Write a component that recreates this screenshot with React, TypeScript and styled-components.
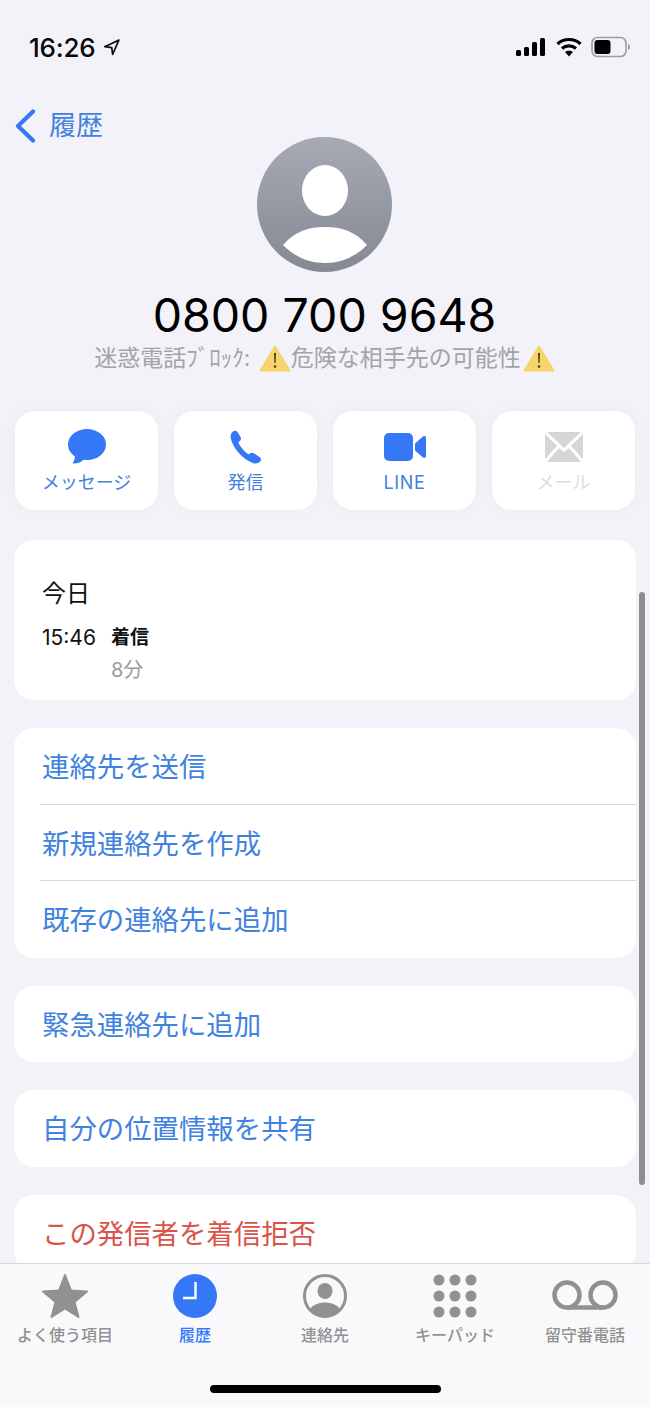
import { createGlobalStyle, styled } from "styled-components";

const BLUE = "#3478f6";
const LINK = "#3f82e0";

const GlobalStyle = createGlobalStyle`
  html, body {
    margin: 0;
    padding: 0;
    background: #f2f2f8;
  }
  body {
    font-family: Inter, "Noto Sans CJK JP", sans-serif;
  }
`;

const Phone = styled.div`
  position: relative;
  width: 650px;
  height: 1407px;
  display: flex;
  flex-direction: column;
  overflow: hidden;
  background: #f2f2f8;
`;

const Content = styled.div`
  flex: 1;
  min-height: 0;
  overflow: hidden;
`;

const StatusBar = styled.div`
  height: 95px;
  padding: 32px 19px 0 29px;
  box-sizing: border-box;
  display: flex;
  justify-content: space-between;
  align-items: flex-start;
`;

const Time = styled.div`
  display: flex;
  align-items: center;
  gap: 8px;
  height: 30px;
  font-size: 26px;
  font-weight: 500;
  letter-spacing: -0.2px;
  color: #0a0a0a;
`;

const StatusIcons = styled.div`
  display: flex;
  align-items: center;
  gap: 9px;
  height: 30px;
`;

const BackLink = styled.div`
  display: flex;
  align-items: center;
  gap: 13px;
  height: 42px;
  padding: 10px 0 0 15px;
  font-size: 27px;
  line-height: 42px;
  color: ${LINK};
`;

const Profile = styled.div`
  display: flex;
  flex-direction: column;
  align-items: center;
  margin-top: -10px;
  padding-right: 1px;
`;

const Avatar = styled.div`
  width: 135px;
  height: 135px;
  border-radius: 50%;
  background: linear-gradient(#a6aab5, #858993);
  overflow: hidden;
`;

const PhoneNumber = styled.div`
  margin-top: 14px;
  height: 58px;
  line-height: 58px;
  font-size: 46.5px;
  color: #000;
`;

const Caption = styled.div`
  display: flex;
  align-items: center;
  height: 30px;
  margin-top: -1px;
  font-size: 23px;
  line-height: 30px;
  color: #a3a3a8;
  white-space: nowrap;
`;

const WarningMark = styled.svg`
  margin-left: 2px;
`;

const Actions = styled.div`
  display: grid;
  grid-template-columns: repeat(4, 143px);
  column-gap: 16px;
  margin: 38px 15px 0;
`;

const ActionButton = styled.div<{ $disabled?: boolean }>`
  height: 99px;
  border-radius: 20px;
  background: #fff;
  display: flex;
  flex-direction: column;
  align-items: center;
  padding-top: 18px;
  box-sizing: border-box;
  color: ${(p) => (p.$disabled ? "#dcdcde" : LINK)};
  box-shadow: 0 0 12px rgba(120, 120, 150, 0.05);
`;

const ActionIcon = styled.div`
  height: 36px;
  display: flex;
  align-items: center;
  justify-content: center;
`;

const ActionLabel = styled.div<{ $wide?: boolean }>`
  margin-top: 6px;
  height: 24px;
  line-height: 24px;
  font-size: 18px;
  letter-spacing: ${(p) => (p.$wide ? "0.7px" : "0")};
`;

const Card = styled.div<{ $gap?: number }>`
  margin: ${(p) => p.$gap ?? 28}px 14px 0;
  background: #fff;
  border-radius: 20px;
  overflow: hidden;
`;

const HistoryCard = styled(Card)`
  height: 160px;
  padding: 38px 28px 0;
  box-sizing: border-box;
`;

const HistoryDay = styled.div`
  height: 32px;
  line-height: 32px;
  font-size: 24px;
  color: #111;
`;

const HistoryRow = styled.div`
  display: grid;
  grid-template-columns: 69px auto;
  align-items: center;
  margin-top: 13px;
  font-size: 21px;
  line-height: 30px;
  color: #111;
`;

const CallType = styled.div`
  font-size: 19px;
  font-weight: 700;
`;

const Duration = styled.div`
  grid-column: 2;
  margin-top: 2px;
  font-size: 20px;
  color: #9b9b9f;
`;

const Row = styled.div<{ $danger?: boolean }>`
  height: 76.5px;
  line-height: 78.5px;
  padding-left: 28px;
  font-size: 27.4px;
  color: ${(p) => (p.$danger ? "#d9534a" : LINK)};
`;

const Divider = styled.div`
  height: 1px;
  margin-left: 26px;
  margin-top: -1px;
  background: #d8d8da;
`;

const Scrollbar = styled.div`
  position: absolute;
  top: 592px;
  left: 639px;
  width: 6px;
  height: 593px;
  border-radius: 3px;
  background: #8d8d93;
`;

const TabBar = styled.div`
  flex: none;
  height: 144px;
  box-sizing: border-box;
  border-top: 1px solid #d9d9dc;
  background: #f9f9fc;
  display: grid;
  grid-template-columns: repeat(5, 130px);
`;

const Tab = styled.div<{ $active?: boolean }>`
  display: flex;
  flex-direction: column;
  align-items: center;
  padding-top: 8px;
  color: ${(p) => (p.$active ? BLUE : "#919193")};
`;

const TabIcon = styled.div`
  height: 48px;
  display: flex;
  align-items: center;
  justify-content: center;
`;

const TabLabel = styled.div`
  margin-top: 4px;
  height: 22px;
  line-height: 22px;
  font-size: 16px;
  font-weight: 500;
  white-space: nowrap;
`;

const HomeIndicator = styled.div`
  position: absolute;
  left: 210px;
  top: 1385px;
  width: 231px;
  height: 8px;
  border-radius: 4px;
  background: #000;
`;

function Warning() {
  return (
    <WarningMark width="32" height="27" viewBox="0 0 32 27">
      <path
        d="M16 1.5 L30.5 25.5 H1.5 Z"
        fill="#f7d56c"
        stroke="#f7d56c"
        strokeWidth="2"
        strokeLinejoin="round"
      />
      <path d="M15 8 h2 l-.4 10 h-1.2 Z" fill="#4a3f1c" />
      <circle cx="16" cy="21.5" r="1.3" fill="#4a3f1c" />
    </WarningMark>
  );
}

const tabs = [
  {
    label: "よく使う項目",
    icon: (
      <svg width="48" height="46" viewBox="0 0 48 46" fill="currentColor">
        <path
          d="M24 2 L30 17.5 L46 18.5 L33.5 29 L37.5 44 L24 35.5 L10.5 44 L14.5 29 L2 18.5 L18 17.5 Z"
          stroke="currentColor"
          strokeWidth="2"
          strokeLinejoin="round"
        />
      </svg>
    ),
  },
  {
    label: "履歴",
    active: true,
    icon: (
      <svg width="44" height="44" viewBox="0 0 44 44">
        <circle cx="22" cy="22" r="22" fill="currentColor" />
        <path d="M22.5 8 V24 H10" fill="none" stroke="#fff" strokeWidth="2.4" />
      </svg>
    ),
  },
  {
    label: "連絡先",
    icon: (
      <svg width="46" height="46" viewBox="0 0 46 46">
        <defs>
          <clipPath id="contactClip">
            <circle cx="23" cy="23" r="20" />
          </clipPath>
        </defs>
        <circle cx="23" cy="23" r="20.5" fill="none" stroke="currentColor" strokeWidth="3" />
        <ellipse cx="23" cy="18" rx="7.5" ry="8" fill="currentColor" />
        <ellipse cx="23" cy="40" rx="16" ry="10.5" fill="currentColor" clipPath="url(#contactClip)" />
      </svg>
    ),
  },
  {
    label: "キーパッド",
    icon: (
      <svg width="44" height="44" viewBox="0 0 44 44" fill="currentColor">
        {[6, 22, 38].map((cy) =>
          [6, 22, 38].map((cx) => <circle key={`${cx}-${cy}`} cx={cx} cy={cy} r="5.5" />),
        )}
      </svg>
    ),
  },
  {
    label: "留守番電話",
    icon: (
      <svg width="66" height="34" viewBox="0 0 66 34" fill="none" stroke="currentColor" strokeWidth="4.5">
        <circle cx="15" cy="16" r="12.5" />
        <circle cx="51" cy="16" r="12.5" />
        <path d="M15 28.5 H51" />
      </svg>
    ),
  },
];

export default function App() {
  return (
    <Phone>
      <GlobalStyle />
      <Content>
        <StatusBar>
          <Time>
            16:26
            <svg width="17" height="17" viewBox="0 0 15 15" fill="none" stroke="#111" strokeWidth="1.5" strokeLinejoin="round">
              <path d="M14 1 L1.5 6.8 L7.7 7.6 L8.5 13.5 Z" />
            </svg>
          </Time>
          <StatusIcons>
            <svg width="31" height="20" viewBox="0 0 31 20" fill="#000">
              <rect x="0" y="13" width="5" height="6" rx="1.5" />
              <rect x="8" y="10" width="5" height="9" rx="1.5" />
              <rect x="16" y="5" width="5" height="14" rx="1.5" />
              <rect x="24" y="1" width="5" height="18" rx="1.5" />
            </svg>
            <svg width="26" height="20" viewBox="0 0 26 20" fill="none" stroke="#000" strokeWidth="3.2">
              <path d="M1.5 7 C7.5 1 18.5 1 24.5 7" />
              <path d="M6 11.5 C10 8 16 8 20 11.5" />
              <path d="M13 19.5 L9 15 C11 13.3 15 13.3 17 15 Z" fill="#000" stroke="none" />
            </svg>
            <svg width="40" height="22" viewBox="0 0 40 22">
              <rect x="1" y="1.5" width="34" height="19" rx="5.5" fill="none" stroke="#9c9c9f" strokeWidth="1.6" />
              <rect x="3.5" y="4" width="16" height="14" rx="3" fill="#000" />
              <path d="M37 8 C38.5 8.5 39 9.5 39 11 C39 12.5 38.5 13.5 37 14 Z" fill="#9c9c9f" />
            </svg>
          </StatusIcons>
        </StatusBar>

        <BackLink>
          <svg width="21" height="34" viewBox="0 0 21 34" fill="none" stroke={BLUE} strokeWidth="4.2" strokeLinecap="round" strokeLinejoin="round">
            <path d="M18 2.5 L3 17 L18 31.5" />
          </svg>
          履歴
        </BackLink>

        <Profile>
          <Avatar>
            <svg width="135" height="135" viewBox="0 0 135 135" fill="#fff">
              <ellipse cx="68" cy="53.5" rx="23" ry="25.5" />
              <path d="M26 108 C38 94 52 90 68 90 C84 90 98 94 110 108 C98 120 84 126 68 126 C52 126 38 120 26 108 Z" />
            </svg>
          </Avatar>
          <PhoneNumber>0800 700 9648</PhoneNumber>
          <Caption>
            迷惑電話ﾌﾞﾛｯｸ:&nbsp;
            <Warning />
            危険な相手先の可能性
            <Warning />
          </Caption>
        </Profile>

        <Actions>
          <ActionButton>
            <ActionIcon>
              <svg width="40" height="36" viewBox="0 0 40 36" fill={BLUE}>
                <ellipse cx="20" cy="15.5" rx="19" ry="15.5" />
                <path d="M8 24 C8.5 29 7 32 5.5 34.5 C10 35 15 33 18 29 Z" />
              </svg>
            </ActionIcon>
            <ActionLabel>メッセージ</ActionLabel>
          </ActionButton>
          <ActionButton>
            <ActionIcon>
              <svg width="32" height="34" viewBox="0 0 32 34" fill={BLUE}>
                <path d="M3 1.5 C4.5 0.3 6.5 0.5 7.5 2 L10.5 7 C11.3 8.5 11 10 9.8 11 L8.3 12.3 C9.5 16 14.5 22 18.5 24.5 L20.3 23.3 C21.5 22.5 23 22.6 24.3 23.5 L29.8 27.2 C31.2 28.2 31.4 30 30.3 31.3 C28.5 33.3 26 34 23.5 33.2 C13 30 3 18 0.8 8.5 C0.2 5.8 1 3.2 3 1.5 Z" />
              </svg>
            </ActionIcon>
            <ActionLabel>発信</ActionLabel>
          </ActionButton>
          <ActionButton>
            <ActionIcon>
              <svg width="42" height="28" viewBox="0 0 42 28" fill={BLUE}>
                <rect x="0" y="0" width="29" height="28" rx="5" />
                <path d="M31 10.5 L39 3.5 C40 2.7 42 3 42 5 V23 C42 25 40 25.3 39 24.5 L31 17.5 Z" />
              </svg>
            </ActionIcon>
            <ActionLabel $wide>LINE</ActionLabel>
          </ActionButton>
          <ActionButton $disabled>
            <ActionIcon>
              <svg width="38" height="30" viewBox="0 0 38 30" fill="#d6d6d8">
                <path d="M2 0 H36 L19 16 Z" />
                <path d="M0 2 L12 14 L0 27 Z" />
                <path d="M38 2 L26 14 L38 27 Z" />
                <path d="M2 30 L14 16 L19 20 L24 16 L36 30 Z" />
              </svg>
            </ActionIcon>
            <ActionLabel>メール</ActionLabel>
          </ActionButton>
        </Actions>

        <HistoryCard $gap={30}>
          <HistoryDay>今日</HistoryDay>
          <HistoryRow>
            <span>15:46</span>
            <CallType>着信</CallType>
            <Duration>8分</Duration>
          </HistoryRow>
        </HistoryCard>

        <Card>
          <Row>連絡先を送信</Row>
          <Divider />
          <Row>新規連絡先を作成</Row>
          <Divider />
          <Row>既存の連絡先に追加</Row>
        </Card>

        <Card>
          <Row>緊急連絡先に追加</Row>
        </Card>

        <Card>
          <Row>自分の位置情報を共有</Row>
        </Card>

        <Card>
          <Row $danger>この発信者を着信拒否</Row>
        </Card>
      </Content>

      <TabBar>
        {tabs.map((tab) => (
          <Tab key={tab.label} $active={tab.active}>
            <TabIcon>{tab.icon}</TabIcon>
            <TabLabel>{tab.label}</TabLabel>
          </Tab>
        ))}
      </TabBar>

      <Scrollbar />
      <HomeIndicator />
    </Phone>
  );
}
